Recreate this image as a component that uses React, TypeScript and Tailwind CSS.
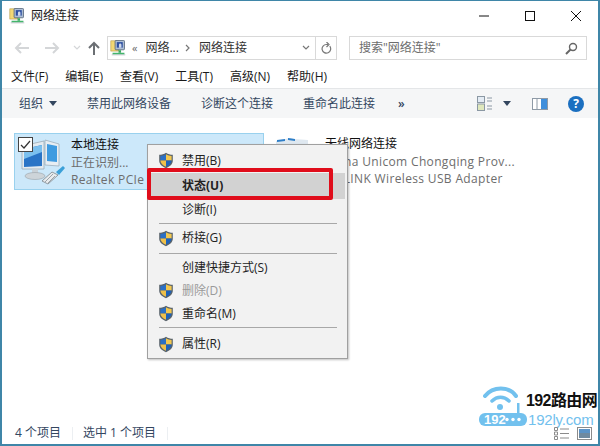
const Shield = () => (
  <svg width="16" height="17" viewBox="0 0 16 17" className="shrink-0">
    <path d="M8 .8C6 2.2 3.6 2.8 1.2 2.8v6c0 3.4 3 5.8 6.8 7.4 3.8-1.6 6.8-4 6.8-7.4v-6C12.400 2.800 10 2.200 8 .8z" fill="#59636b" />
    <path d="M8 2.200C6.300 3.200 4.400 3.700 2.400 3.900V8.500H8z" fill="#2b6fc4" />
    <path d="M8 2.200C9.700 3.200 11.600 3.700 13.600 3.900V8.500H8z" fill="#f3c84f" />
    <path d="M2.400 8.500H8v6.300C5 13.500 2.500 11.500 2.400 8.500z" fill="#efc04a" />
    <path d="M13.600 8.500H8v6.300c3-1.300 5.500-3.300 5.600-6.300z" fill="#1f62b8" />
  </svg>
);

const NetIcon = ({ size = 20 }: { size?: number }) => (
  <svg width={size} height={size} viewBox="0 0 20 20" className="shrink-0">
    <rect x="1" y="1" width="9" height="12" fill="#f3d873" stroke="#b3973f" strokeWidth=".7" />
    <rect x="6" y="0.500" width="11" height="11" rx="1" fill="#aebfd6" stroke="#55657a" />
    <rect x="8" y="2.500" width="7" height="6.500" fill="#2d4fa0" />
    <path d="M9 9h1.500V5.500a1.500 1.500 0 0 1 3 0V9H12" fill="#cfd9ea" />
    <rect x="10" y="12" width="3" height="3" fill="#3aa860" />
    <rect x="3" y="15" width="14" height="2" fill="#43b56b" />
    <rect x="2" y="17" width="16" height="1" fill="#b8c0c8" />
  </svg>
);

const Computer = () => (
  <svg width="50" height="50" viewBox="0 0 50 50" className="shrink-0">
    <path d="M28 3l14 4v22l-14-1z" fill="#e8eef3" stroke="#9fb0bc" strokeWidth=".8" />
    <path d="M30 7l10 2v16l-10-1z" fill="#3f9be0" />
    <path d="M5 9l22-5v28L5 32z" fill="#e4ebf0" stroke="#9aabb8" strokeWidth=".8" />
    <path d="M7 12l18-4v21L7 30z" fill="#2a74c6" />
    <path d="M7 12l18-4v7L7 22z" fill="#7cc0ee" />
    <rect x="15" y="32" width="6" height="5" fill="#c9d1d7" />
    <ellipse cx="18" cy="39" rx="10" ry="3.500" fill="#cdd4d9" stroke="#99a3aa" strokeWidth=".6" />
    <path d="M25 44l10-9 6 3-10 9z" fill="#e8ebed" stroke="#7c858c" strokeWidth=".8" />
    <path d="M28 45l8-8M31 46l7-7" stroke="#7c858c" strokeWidth=".7" />
    <path d="M39 35l7-6 2 2-6 7z" fill="#3ba0d8" />
  </svg>
);

const Check = () => (
  <div className="absolute left-[3px] top-[3px] flex h-[15px] w-[15px] items-center justify-center border border-[#444] bg-white">
    <svg width="11" height="11" viewBox="0 0 11 11"><path d="M1 6l3 3 6-7" fill="none" stroke="#333" strokeWidth="1.200" /></svg>
  </div>
);

const Logo = () => (
  <div className="relative h-[44px] w-[118px]">
    <svg width="50" height="44" viewBox="0 0 50 44" className="absolute left-0 top-0">
      <g fill="none" stroke="#72c1ee" strokeLinecap="round">
        <path d="M6 10C14 0 30 0 37 10" strokeWidth="4" />
        <path d="M13 15c5-5 12-5 17 0" strokeWidth="3.500" />
      </g>
      <circle cx="21" cy="21" r="3" fill="#72c1ee" />
      <rect x="0" y="27" width="48" height="13" rx="6" fill="#72c1ee" />
      <rect x="38" y="17" width="2.500" height="11" fill="#72c1ee" />
      <circle cx="28" cy="33.500" r="1.700" fill="#fff" />
      <circle cx="34" cy="33.500" r="1.700" fill="#fff" />
      <circle cx="40" cy="33.500" r="1.700" fill="#fff" />
    </svg>
    <span className="absolute left-[5px] top-[26px] text-[13px] font-bold leading-[15px] text-white" style={{ fontFamily: '"Liberation Sans",sans-serif' }}>192</span>
    <span className="absolute left-[47px] top-[6px] whitespace-nowrap text-[16px] font-bold leading-[18px] tracking-[-0.6px] text-[#111]" style={{ fontFamily: '"Liberation Sans","Noto Sans CJK SC",sans-serif' }}>192路由网</span>
    <span className="absolute left-[49px] top-[26px] whitespace-nowrap text-[15px] leading-[16px] tracking-[-0.2px] text-[#72c1ee]" style={{ fontFamily: '"Liberation Sans",sans-serif' }}>192ly.com</span>
  </div>
);

const items: ({ label: string; shield?: boolean; dim?: boolean; bold?: boolean; h: number } | { sep: true; h: number })[] = [
  { label: "禁用(B)", shield: true, h: 25 },
  { label: "状态(U)", bold: true, h: 26 },
  { label: "诊断(I)", h: 22 },
  { sep: true, h: 4 },
  { label: "桥接(G)", shield: true, h: 26 },
  { sep: true, h: 5 },
  { label: "创建快捷方式(S)", h: 23 },
  { label: "删除(D)", shield: true, dim: true, h: 23 },
  { label: "重命名(M)", shield: true, h: 23 },
  { sep: true, h: 5 },
  { label: "属性(R)", shield: true, h: 28 },
];

export default function App() {
  return (
    <div
      className="relative flex h-[446px] w-[600px] flex-col overflow-hidden border-x-2 border-b-2 border-t border-[#3f86a8] bg-white text-[12px] text-[#1a1a1a]"
      style={{ fontFamily: '"Open Sans","Noto Sans CJK SC",sans-serif' }}
    >
      {/* title */}
      <div className="flex h-[29px] shrink-0 items-center pl-[7px] pt-[1px]">
        <NetIcon size={17} />
        <span className="ml-[5px] leading-none text-[#222]">网络连接</span>
        <div className="ml-auto flex items-center pr-[16px] text-[#222]">
          <svg width="12" height="12" viewBox="0 0 12 12" className="mr-[34px]"><path d="M1 6h10" stroke="#111" /></svg>
          <svg width="12" height="12" viewBox="0 0 12 12" className="mr-[34px]"><rect x="1.500" y="1.500" width="9" height="9" fill="none" stroke="#111" /></svg>
          <svg width="12" height="12" viewBox="0 0 12 12"><path d="M1 1l10 10M11 1L1 11" stroke="#111" /></svg>
        </div>
      </div>

      {/* nav */}
      <div className="flex h-[36px] shrink-0 items-center pl-[12px] pr-[11px]">
        <svg width="16" height="14" viewBox="0 0 16 14" className="shrink-0"><path d="M15 7H2M7 2L2 7l5 5" fill="none" stroke="#d4d6d8" strokeWidth="2" /></svg>
        <svg width="16" height="14" viewBox="0 0 16 14" className="ml-[14px] shrink-0"><path d="M1 7h13M9 2l5 5-5 5" fill="none" stroke="#d4d6d8" strokeWidth="2" /></svg>
        <svg width="8" height="6" viewBox="0 0 8 6" className="ml-[13px] shrink-0"><path d="M1 1l3 3 3-3" fill="none" stroke="#d4d6d8" strokeWidth="1.200" /></svg>
        <svg width="14" height="15" viewBox="0 0 14 15" className="ml-[6px] shrink-0"><path d="M7 14V2M2 7l5-5 5 5" fill="none" stroke="#6b6f73" strokeWidth="2" /></svg>
        <div className="ml-[6px] flex h-[24px] w-[209px] shrink-0 items-center border border-[#d9d9d9] pl-[2px]">
          <NetIcon size={17} />
          <span className="ml-[5px] text-[11px] text-[#666]">«</span>
          <span className="ml-[8px] text-[#333]">网络...</span>
          <svg width="6" height="8" viewBox="0 0 6 8" className="ml-[6px] shrink-0"><path d="M1 1l3 3-3 3" fill="none" stroke="#777" strokeWidth="1.200" /></svg>
          <span className="ml-[8px] text-[#333]">网络连接</span>
          <svg width="8" height="6" viewBox="0 0 8 6" className="ml-auto mr-[5px] shrink-0"><path d="M1 1l3 3 3-3" fill="none" stroke="#777" strokeWidth="1.200" /></svg>
        </div>
        <div className="flex h-[24px] w-[21px] shrink-0 items-center justify-center border border-l-0 border-[#d9d9d9]">
          <svg width="11" height="13" viewBox="0 0 11 13"><path d="M8.800 4.200A4.300 4.300 0 1 1 5.500 2.500H7M5.500 0l2.500 2.500L5.500 5" fill="none" stroke="#777" strokeWidth="1.200" /></svg>
        </div>
        <div className="ml-[12px] flex h-[24px] min-w-0 flex-1 items-center justify-between border border-[#d9d9d9] pl-[9px] pr-[8px]">
          <span className="text-[#6d6d6d]">搜索"网络连接"</span>
          <svg width="13" height="13" viewBox="0 0 13 13"><circle cx="8" cy="5" r="3.500" fill="none" stroke="#666" strokeWidth="1.400" /><path d="M5.500 7.500L1 12" stroke="#666" strokeWidth="2" /></svg>
        </div>
      </div>

      {/* menu */}
      <div className="flex h-[22px] shrink-0 items-center gap-[17px] pl-[9px]">
        {["文件(F)", "编辑(E)", "查看(V)", "工具(T)", "高级(N)", "帮助(H)"].map((m) => (
          <span key={m} className="whitespace-nowrap leading-none">{m}</span>
        ))}
      </div>

      {/* toolbar */}
      <div className="flex h-[30px] shrink-0 items-center whitespace-nowrap border-t border-[#e4e6e8] bg-[#f5f6f7] pl-[17px] text-[#33465f]">
        <span>组织</span>
        <svg width="8" height="5" viewBox="0 0 8 5" className="ml-[6px] shrink-0"><path d="M0 0h8L4 5z" fill="#33465f" /></svg>
        <span className="ml-[30px]">禁用此网络设备</span>
        <span className="ml-[30px]">诊断这个连接</span>
        <span className="ml-[30px]">重命名此连接</span>
        <span className="ml-[23px] w-[7px] text-[12px] font-semibold leading-none">»</span>
        <svg width="16" height="15" viewBox="0 0 16 15" className="ml-[72px] shrink-0">
          <rect x=".5" y=".5" width="7" height="6" fill="#e4ecf4" stroke="#8b98a4" />
          <rect x=".5" y="8" width="7" height="6.500" fill="#dfe8bd" stroke="#8b98a4" />
          <path d="M10 2h5M10 5h5M10 10h5M10 13h5" stroke="#8b98a4" />
        </svg>
        <svg width="8" height="5" viewBox="0 0 8 5" className="ml-[10px] shrink-0"><path d="M0 0h8L4 5z" fill="#33465f" /></svg>
        <svg width="16" height="12" viewBox="0 0 16 12" className="ml-[21px] shrink-0">
          <rect x=".5" y=".5" width="15" height="11" fill="#fff" stroke="#8e9aa6" />
          <rect x="9" y="1" width="6" height="10" fill="#3f8fdc" />
          <path d="M5 1v10" stroke="#8e9aa6" />
        </svg>
        <div className="ml-[20px] flex h-[16px] w-[16px] shrink-0 items-center justify-center rounded-full bg-[#1b6fc0] text-[12px] font-bold leading-none text-white">?</div>
      </div>

      {/* content */}
      <div className="relative flex min-h-0 flex-1 items-start pl-[12px] pt-[15px]">
        <div className="relative flex h-[57px] w-[250px] shrink-0 border border-[#99d1ee] bg-[#cce8fa]">
          <Check />
          <div className="ml-[2px] mt-[3px]"><Computer /></div>
          <div className="ml-[4px] flex flex-col pt-[2px] leading-[17.5px]">
            <span className="text-[#111]">本地连接</span>
            <span className="text-[#6d6d6d]">正在识别...</span>
            <span className="whitespace-nowrap tracking-[0.35px] text-[#6d6d6d]">Realtek PCIe GBE Family</span>
          </div>
        </div>
        <div className="ml-[10px] flex h-[57px]">
          <svg width="36" height="50" viewBox="0 0 36 50" className="shrink-0">
            <path d="M2 8l14-3 4 1 14 1v30H2z" fill="#dfe8f0" />
            <path d="M3 7l8-1v2l-8 1zM14 5l7 1v2l-7-1z" fill="#2f7fc8" />
          </svg>
          <div className="ml-[15px] flex flex-col pt-[2px] leading-[17.5px]">
            <span className="text-[#111]">无线网络连接</span>
            <span className="whitespace-nowrap tracking-[0.35px] text-[#6d6d6d]">China Unicom Chongqing Prov...</span>
            <span className="whitespace-nowrap tracking-[0.35px] text-[#6d6d6d]">TP-LINK Wireless USB Adapter</span>
          </div>
        </div>

        {/* context menu */}
        <div className="absolute left-[145px] top-[26px] z-10 flex h-[215px] w-[201px] flex-col border border-[#a0a0a0] bg-[#f2f2f2] pt-[3px] pr-[2px] shadow-[1px_1px_2px_rgba(0,0,0,0.25)]">
          {items.map((it, i) =>
            "sep" in it ? (
              <div key={i} className="flex shrink-0 items-center pl-[11px] pr-[8px]" style={{ height: it.h }}>
                <div className="h-px w-full bg-[#a8a8a8]" />
              </div>
            ) : (
              <div
                key={i}
                className={it.bold ? "flex shrink-0 items-center bg-[#d2d2d2] pl-[34px] font-bold text-[#111]" : "flex shrink-0 items-center pl-[34px]"}
                style={{ height: it.h }}
              >
                {it.shield && <div className="-ml-[24px] mr-[8px]"><Shield /></div>}
                <span className={it.dim ? "text-[#9a9a9a]" : "text-[#222]"}>{it.label}</span>
              </div>
            )
          )}
        </div>
        {/* red highlight */}
        <div className="absolute left-[145px] top-[50px] z-20 h-[32px] w-[186px] rounded-[2px] border-4 border-[#e00d1b]" />
      </div>

      {/* status */}
      <div className="flex h-[26px] shrink-0 items-center pl-[13px] pt-[4px] text-[#33465f]">
        <span>4 个项目</span>
        <span className="ml-[11px] h-[13px] w-px bg-[#eceff2]" />
        <span className="ml-[10px]">选中 1 个项目</span>
        <span className="ml-[11px] h-[13px] w-px bg-[#eceff2]" />
      </div>

      {/* watermark */}
      <div className="absolute left-[477px] top-[385px] z-10">
        <Logo />
      </div>
      <div className="absolute right-[6px] top-[426px] z-10 flex items-center gap-[7px]">
        <svg width="16" height="13" viewBox="0 0 16 13">
          <path d="M.5.500h3v3h-3zM.5 5h3v3h-3zM.5 9.500h3v3h-3z" fill="#fff" stroke="#8b8b8b" />
          <path d="M6 2h9M6 6.500h9M6 11h9" stroke="#8b8b8b" />
        </svg>
        <svg width="15" height="13" viewBox="0 0 15 13">
          <rect x=".5" y=".5" width="14" height="12" fill="#fff" stroke="#8b8b8b" />
          <rect x="2" y="2" width="11" height="4" fill="#5b93c7" />
          <rect x="2" y="6" width="11" height="5" fill="#6f8aa0" />
        </svg>
      </div>
    </div>
  );
}
